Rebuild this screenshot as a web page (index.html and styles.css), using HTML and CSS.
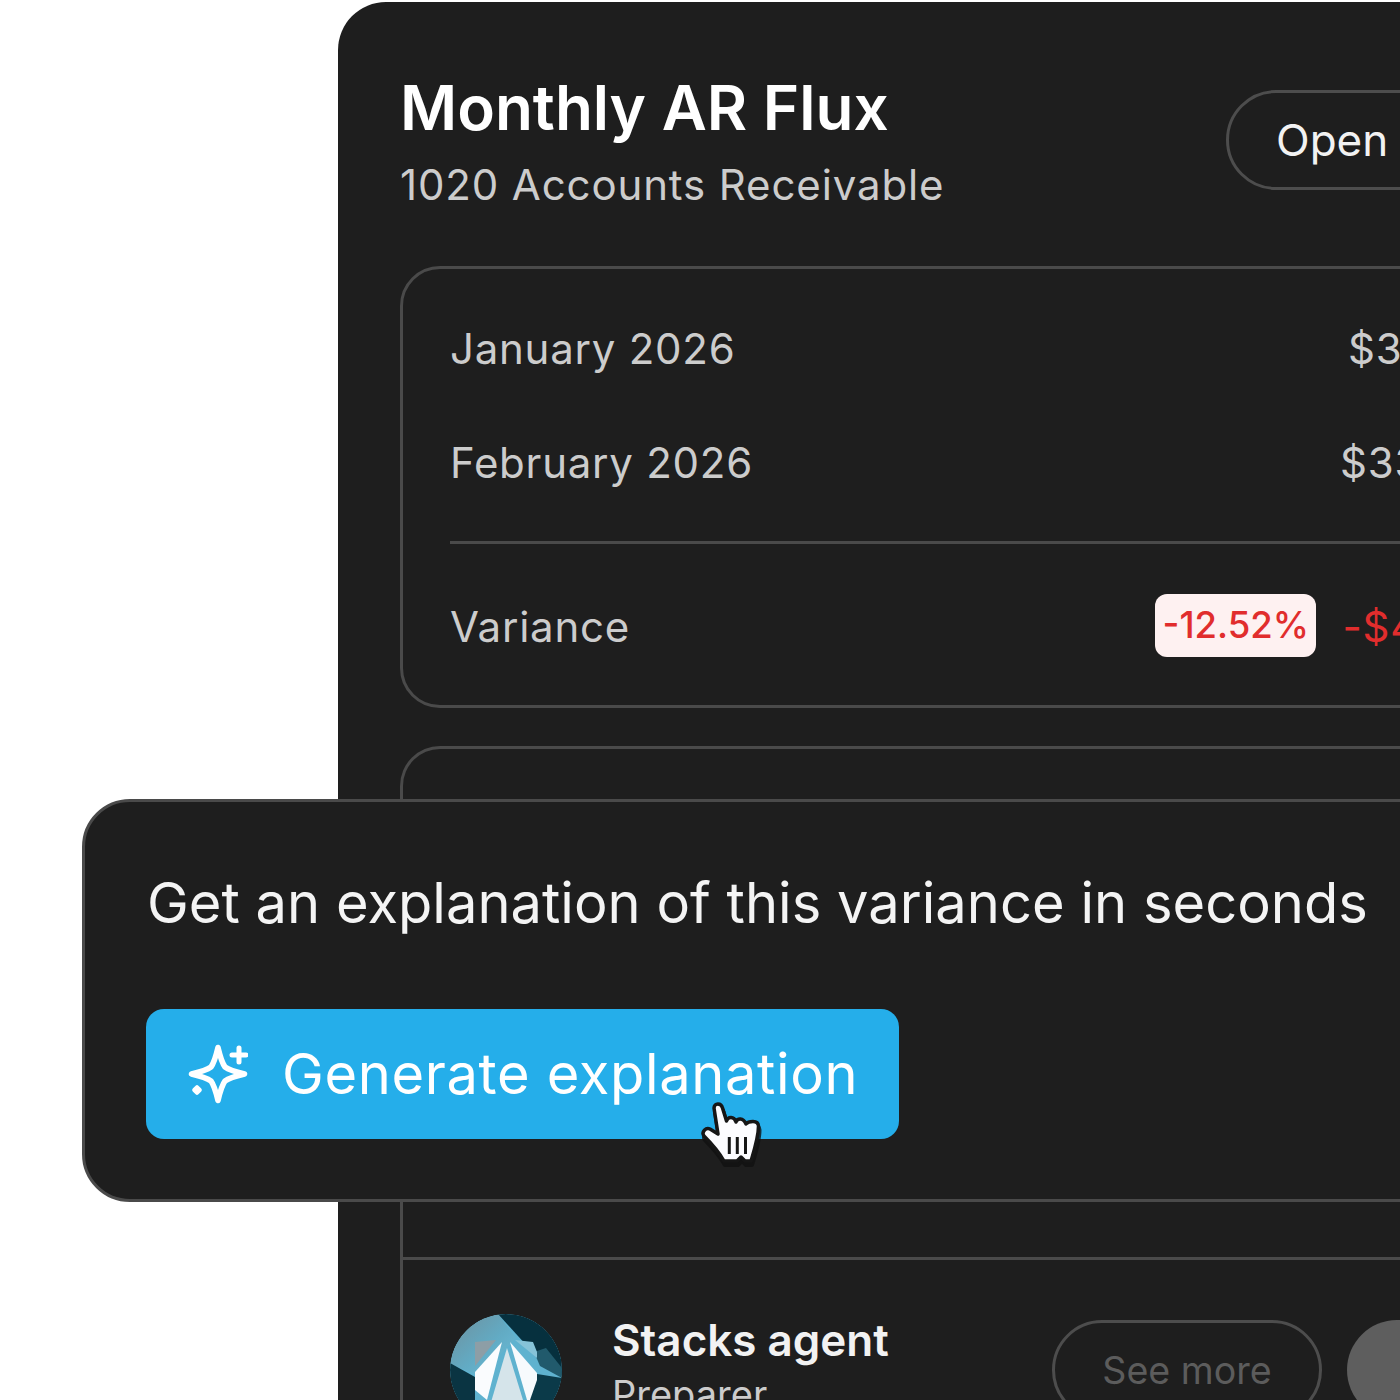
FILE: index.html
```html
<!DOCTYPE html>
<html lang="en">
<head>
<meta charset="utf-8">
<title>Monthly AR Flux</title>
<link rel="stylesheet" href="styles.css">
</head>
<body>
<div class="stage">
  <main class="panel">
    <header class="panel-head">
      <div class="titles">
        <h1 class="title">Monthly AR Flux</h1>
        <p class="subtitle">1020 Accounts Receivable</p>
      </div>
      <button class="pill pill-open">Open</button>
    </header>
    <section class="card card-figures">
      <div class="row row-jan"><span>January 2026</span><span class="amount">$38,164.00</span></div>
      <div class="row row-feb"><span>February 2026</span><span class="amount">$33,387.00</span></div>
      <hr class="rule">
      <div class="row row-var">
        <span>Variance</span>
        <span class="var-values"><span class="badge">-12.52%</span><span class="neg">-$4,777.00</span></span>
      </div>
    </section>
    <section class="card card-agent">
      <div class="agent-spacer"></div>
      <div class="agent">
        <svg class="avatar" viewBox="0 0 112 112" aria-hidden="true">
          <defs>
            <clipPath id="av"><circle cx="56" cy="56" r="56"/></clipPath>
            <linearGradient id="avg" x1="0" y1="0" x2="1" y2="1">
              <stop offset="0" stop-color="#6f8f9c"/><stop offset="0.55" stop-color="#62abc4"/><stop offset="1" stop-color="#6cc0dc"/>
            </linearGradient>
          </defs>
          <g clip-path="url(#av)">
            <rect width="112" height="112" fill="#5fb2cf"/>
            <polygon points="0,0 48,0 66,24 30,62 0,50" fill="url(#avg)"/>
            <polygon points="48,0 112,0 112,62 87,43" fill="#06303e"/>
            <polygon points="84,38 96,34 112,54 112,64 90,52" fill="#215a6c"/>
            <polygon points="0,49 25,63 25,112 0,112" fill="#0a3442"/>
            <polygon points="87,60 112,64 112,112 70,112" fill="#0b3a49"/>
            <polygon points="25,28 46,26 25,52" fill="#8d9ea6"/>
            <polygon points="65,26 83,28 87,38 87,44" fill="#86c3d8"/>
            <polygon points="52,28 25,58 25,76 37,86" fill="#fafcfe"/>
            <polygon points="57,34 34,112 81,112" fill="#d5e4ea"/>
            <polygon points="60,28 87,59 87,66 80,86 77,86" fill="#f7fafd"/>
          </g>
        </svg>
        <div class="agent-text">
          <div class="agent-name">Stacks agent</div>
          <div class="agent-role">Preparer</div>
        </div>
        <button class="pill pill-more">See more</button>
        <span class="round"></span>
      </div>
    </section>
  </main>

  <aside class="popover">
    <p class="pop-text">Get an explanation of this variance in seconds</p>
    <button class="generate">
      <svg class="sparkle" viewBox="0 0 60 60" aria-hidden="true">
        <path d="M30 3.500 C32 12 34 19 37 23 C41 26 48 28 56.500 30 C48 32 41 34 37 37 C34 41 32 48 30 56.500 C28 48 26 41 23 37 C19 34 12 32 3.500 30 C12 28 19 26 23 23 C26 19 28 12 30 3.500 Z" fill="none" stroke="#fff" stroke-width="5.500" stroke-linejoin="round"/>
        <path d="M51 4 V18 M44 11 H58" fill="none" stroke="#fff" stroke-width="5" stroke-linecap="round"/>
        <rect x="5" y="42" width="8" height="8" rx="2" transform="rotate(45 9 46)" fill="#fff"/>
      </svg>
      <span>Generate explanation</span>
    </button>
    <svg class="cursor" viewBox="0 0 64 70" aria-hidden="true">
      <path d="M14 7 C14 1.500 21.500 1.500 22.500 7 L26.500 20 C28 15.500 34 15 36 21 C37.500 17 43 16.500 46 23 C48 20.500 58 18 58.500 25 C58.500 36 54 50 51 60 L45 60 L41 56 L37 60 L24 60 C20 53 13 44 4 35 C1 31 6 26 10 28 L18 33 Z" transform="translate(1 4)" fill="#111" stroke="#111" stroke-width="4" stroke-linejoin="round" opacity=".8"/>
      <path d="M14 7 C14 1.500 21.500 1.500 22.500 7 L26.500 20 C28 15.500 34 15 36 21 C37.500 17 43 16.500 46 23 C48 20.500 58 18 58.500 25 C58.500 36 54 50 51 60 L45 60 L41 56 L37 60 L24 60 C20 53 13 44 4 35 C1 31 6 26 10 28 L18 33 Z" fill="#fcfcff" stroke="#161616" stroke-width="3.500" stroke-linejoin="round"/>
      <path d="M29.300 36 V53 M37.300 36 V53 M45.500 36 V53" fill="none" stroke="#161616" stroke-width="3"/>
    </svg>
  </aside>
</div>
</body>
</html>
```
FILE: styles.css
```css
* { box-sizing: border-box; }
html, body { margin: 0; padding: 0; background: #fff; }
body { font-family: Inter, "Noto Sans", sans-serif; }
.stage { position: relative; width: 1400px; height: 1400px; overflow: hidden; background: #fff; }

.panel {
  width: 1300px; height: 1500px; margin-left: 338px; padding: 70px 0 0 62px;
  position: relative; top: 2px; background: #1e1e1e; border-radius: 48px;
}
.panel-head { display: flex; justify-content: space-between; align-items: flex-start; width: 1126px; height: 194px; }
.title { margin: 0; font-size: 62px; line-height: 72px; font-weight: 600; color: #fff; }
.subtitle { margin: 16px 0 0; font-size: 42px; line-height: 50px; font-weight: 400; color: #cccccc; letter-spacing: 0.87px; }
.pill { font-family: inherit; background: transparent; border: 3px solid #4d4d4d; border-radius: 60px; }
.pill-open { margin: 18px 0 0; width: 300px; height: 100px; padding: 0 0 0 47px; text-align: left; font-size: 44px; color: #f2f2f2; }

.card { width: 1200px; border: 3px solid #4a4a4a; border-radius: 40px; }
.card-figures { height: 442px; padding: 0 47px; }
.row { display: flex; justify-content: space-between; align-items: center; font-size: 42px; color: #cccccc; letter-spacing: 0.75px; width: 1000px; height: 50px; }
.amount { width: 1px; flex: none; white-space: nowrap; }
.row-jan { margin-top: 54px; }
.row-jan .amount { margin-right: 101px; }
.row-feb { margin-top: 64px; }
.row-feb .amount { margin-right: 109px; }
.rule { height: 3px; margin: 54px 0 0; border: 0; background: #4a4a4a; }
.row-var { margin-top: 57px; }
.var-values { display: flex; align-items: center; gap: 26px; flex: none; width: 295px; }
.badge { flex: none; background: #fef1f1; color: #e12d2d; font-size: 36.500px; font-weight: 500; line-height: 63px; height: 63px; margin-bottom: 2px; padding: 0 7.500px; border-radius: 12px; letter-spacing: 0; }
.neg { color: #e12d2d; white-space: nowrap; }

.card-agent { margin-top: 38px; height: 800px; border-bottom: 0; }
.agent-spacer { height: 511px; border-bottom: 3px solid #4a4a4a; }
.agent { display: flex; align-items: flex-start; padding: 54px 0 0 47px; }
.avatar { width: 112px; height: 112px; flex: none; border-radius: 50%; }
.agent-text { margin: 0 0 0 50px; width: 440px; flex: none; }
.agent-name { font-size: 44px; line-height: 50px; font-weight: 600; color: #f2f2f2; margin-top: 1px; }
.agent-role { font-size: 38px; line-height: 44px; color: #cccccc; margin-top: 7px; }
.pill-more { margin-top: 6px; width: 270px; height: 100px; flex: none; font-size: 37.600px; color: #5c5c5c; padding: 0; }
.round { margin: 6px 0 0 25px; width: 100px; height: 100px; flex: none; border-radius: 50%; background: #5e5e5e; }

.popover {
  position: absolute; left: 82px; top: 799px; width: 1400px; height: 403px;
  padding: 67px 0 0 61px; background: #1e1e1e; border: 3px solid #4a4a4a; border-radius: 48px;
}
.pop-text { margin: 0 0 0 1px; font-size: 56px; line-height: 68px; font-weight: 400; color: #f4f4f4; letter-spacing: 0.03px; white-space: nowrap; }
.generate {
  display: flex; align-items: center; gap: 34px; width: 753px; height: 130px; margin-top: 72px; padding: 0 0 0 42px;
  background: #25aeea; color: #fff; border: 0; border-radius: 18px; font-family: inherit; font-size: 56px; font-weight: 400; letter-spacing: 0.65px;
}
.sparkle { width: 60px; height: 60px; flex: none; }
.cursor { position: absolute; left: 615px; top: 299px; width: 64px; height: 70px; }
```
